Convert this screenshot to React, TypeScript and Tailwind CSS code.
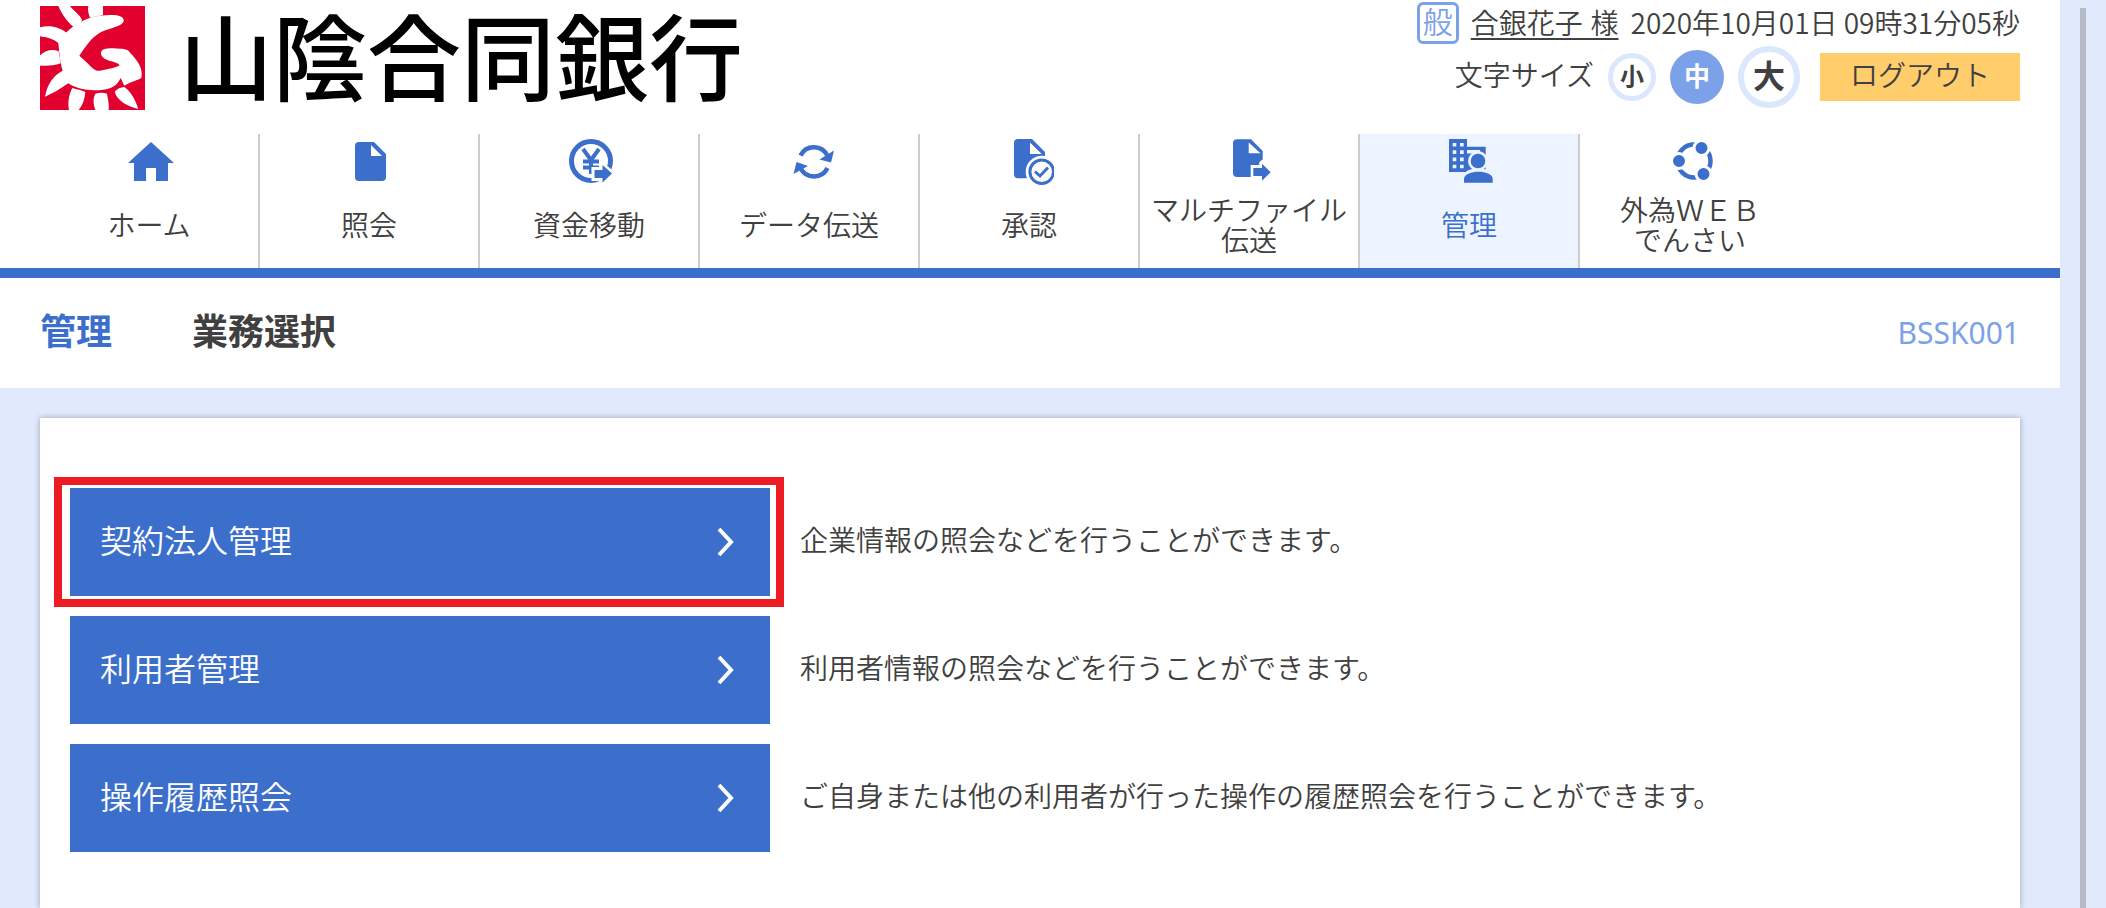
import type { ReactNode } from "react";

interface NavItem { label: string; icon: ReactNode; active?: boolean }
interface Task { label: string; note: string; marked?: boolean }

const Glyph = ({ children }: { children: ReactNode }) => (
  <svg viewBox="0 0 50 50" className="h-[50px] w-[50px]" fill="currentColor" aria-hidden="true">{children}</svg>
);

const NAV: NavItem[] = [
  {
    label: "ホーム",
    icon: <Glyph><path d="M27 6 50 27H44V45H32V32H22V45H10V27H4Z" /></Glyph>,
  },
  {
    label: "照会",
    icon: <Glyph><path fillRule="evenodd" d="M15 6H30L42 18V41a4 4 0 0 1-4 4H15a4 4 0 0 1-4-4V10a4 4 0 0 1 4-4ZM27 9V20H38Z" /></Glyph>,
  },
  {
    label: "資金移動",
    icon: (
      <Glyph>
        <circle cx="27" cy="25" r="19.5" fill="none" stroke="currentColor" strokeWidth="5" />
        <path d="M19 13l8 11 8-11M27 23V38M19 25.5H35M19 31.5H35" fill="none" stroke="currentColor" strokeWidth="4" />
        <path d="M27.5 31H36V24L52 37 38 50V45H27.5Z" fill="#fff" />
        <path d="M30.5 34H38.5V29L48 37.5 38.5 46.5V42H30.5Z" />
      </Glyph>
    ),
  },
  {
    label: "データ伝送",
    icon: (
      <Glyph>
        <path d="M16.5 19.5A15 15 0 0 1 43.5 20M43.5 32A15 15 0 0 1 16.5 32" fill="none" stroke="currentColor" strokeWidth="4.5" />
        <path d="M50 14.5 47 26.5 35.5 23.5ZM9.5 38 12.5 26 24 30Z" />
      </Glyph>
    ),
  },
  {
    label: "承認",
    icon: (
      <Glyph>
        <path fillRule="evenodd" d="M14 3H28L41 16V20L26 42.3H14a4 4 0 0 1-4-4V7a4 4 0 0 1 4-4ZM26 6.5V18H37.7Z" />
        <circle cx="37.7" cy="35.7" r="16" fill="#fff" />
        <circle cx="37.7" cy="35.7" r="11.8" fill="none" stroke="currentColor" strokeWidth="3" />
        <path d="m31 35.5 5 4.5 8-8.5" fill="none" stroke="currentColor" strokeWidth="3" />
      </Glyph>
    ),
  },
  {
    label: "マルチファイル\n伝送",
    icon: (
      <Glyph>
        <path fillRule="evenodd" d="M13 3.3H27L38.7 15V23.5L35.3 26V29H26.7V41H13a4 4 0 0 1-4-4V7.3a4 4 0 0 1 4-4ZM24.7 6.5V17.3H36.5Z" />
        <path d="M29.3 32H38V27.7L46.7 36.3 38 44.7V40H29.3Z" />
      </Glyph>
    ),
  },
  {
    label: "管理",
    active: true,
    icon: (
      <Glyph>
        <path fillRule="evenodd" d="M5 3H23V10.7H41.7V36H5ZM8.7 7V10.5H12.3V7ZM16 7V10.5H19.7V7ZM8.7 14.3V18H12.3V14.3ZM16 14.3V18H19.7V14.3ZM8.7 21.5V25.2H12.3V21.5ZM16 21.5V25.2H19.7V21.5ZM8.7 28.7V32.3H12.3V28.7ZM16 28.7V32.3H19.7V28.7ZM23 14V17.5H36V14Z" />
        <circle cx="34" cy="25" r="10" fill="#edf4ff" />
        <path d="M17 49C17 36 24 32.5 34 32.5S52 36 52 49Z" fill="#edf4ff" />
        <circle cx="34" cy="25" r="7.3" />
        <path d="M20 46.7V43C20 38 28 35.8 34.5 35.8S48.7 38 48.7 43V46.7Z" />
      </Glyph>
    ),
  },
  {
    label: "外為ＷＥＢ\nでんさい",
    icon: (
      <Glyph>
        <circle cx="29" cy="25" r="16.5" fill="none" stroke="currentColor" strokeWidth="4.5" />
        <g stroke="#fff" strokeWidth="3">
          <circle cx="14" cy="25" r="7.5" />
          <circle cx="36.5" cy="12" r="7.5" />
          <circle cx="38.5" cy="38" r="7.5" />
        </g>
      </Glyph>
    ),
  },
];

const TASKS: Task[] = [
  { label: "契約法人管理", note: "企業情報の照会などを行うことができます。", marked: true },
  { label: "利用者管理", note: "利用者情報の照会などを行うことができます。" },
  { label: "操作履歴照会", note: "ご自身または他の利用者が行った操作の履歴照会を行うことができます。" },
];

function LogoMark() {
  return (
    <svg viewBox="120 18 315 312" className="h-[104px] w-[105px]" aria-hidden="true">
      <path d="M120 18H435V330H120Z" fill="#e2002f" />
      <g fill="#fff">
        <path d="M198 98C225 70 260 52 300 47C345 42 374 46 371 64C366 80 335 82 302 97C270 116 258 140 238 167L265 192C280 208 288 214 300 212C325 208 350 202 359 196C352 182 308 186 303 162C302 148 315 145 340 145C372 147 382 146 390 158C412 180 430 205 424 234C405 244 390 246 373 257L362 234C352 256 335 266 310 269C270 274 232 268 205 250C182 266 160 280 135 290C142 252 160 226 188 212C180 185 178 160 175 128Z" />
        <path d="M120 82C152 74 178 82 200 98L178 132C160 116 142 112 120 109Z" />
        <path d="M120 166C138 150 158 146 176 154L182 190C160 198 140 198 120 197Z" />
        <path d="M175 18H210C222 34 240 44 246 60C242 72 232 74 220 80C198 62 186 42 175 18Z" />
        <path d="M265 18H309V45C298 48 284 50 270 53C266 42 262 30 265 18Z" />
        <path d="M217 264C230 268 244 270 256 276C254 298 248 316 236 330H207C203 308 206 284 217 264Z" />
        <path d="M286 281Q304 276 321 281C324 298 328 314 326 330H286C280 312 278 296 286 281Z" />
        <path d="M344 275C352 266 362 262 373 261C394 276 406 300 415 327C386 320 352 304 344 275Z" />
      </g>
    </svg>
  );
}

export default function App() {
  return (
    <div className="flex min-h-screen bg-[#e0eafc] font-['Liberation_Sans','Noto_Sans_CJK_JP',sans-serif] text-[28px] leading-[30px] font-[350] text-[#404040]">
      <div className="flex min-w-0 flex-1 flex-col">
        <header className="bg-white">
          <div className="flex h-[134px] items-start justify-between px-10">
            <div className="flex items-start gap-[34px] pt-[6px]">
              <LogoMark />
              <span className="text-[94px] leading-[112px] font-medium whitespace-nowrap text-black">山陰合同銀行</span>
            </div>
            <div className="flex flex-col items-end whitespace-nowrap">
              <div className="flex h-[46px] items-center gap-3">
                <span className="flex h-[42px] w-[42px] items-center justify-center rounded-md border-[3px] border-[#7ba2e8] text-[30px] text-[#7ba2e8]">般</span>
                <div className="flex items-baseline gap-3">
                  <a href="#user" className="underline underline-offset-4">合銀花子 様</a>
                  <time className="font-['Noto_Sans_CJK_JP',sans-serif]">2020年10月01日 09時31分05秒</time>
                </div>
              </div>
              <div className="flex h-[62px] items-center gap-[14px]">
                <span>文字サイズ</span>
                <button type="button" className="h-12 w-12 rounded-full border-[5px] border-[#dbe7fd] text-[24px] font-bold">小</button>
                <button type="button" className="h-[54px] w-[54px] rounded-full bg-[#7ba2e8] text-[26px] font-bold text-white">中</button>
                <button type="button" className="h-[62px] w-[62px] rounded-full border-[6px] border-[#dbe7fd] text-[32px] font-bold">大</button>
                <button type="button" className="ml-[6px] h-12 w-[200px] bg-[#ffcd6c]">ログアウト</button>
              </div>
            </div>
          </div>
          <nav className="flex h-36 border-b-[10px] border-[#3b6fcb] px-10">
            {NAV.map((n, i) => (
              <a
                key={n.label}
                href={`#menu${i}`}
                className={`flex w-[220px] flex-col items-center pt-[2px] ${i < NAV.length - 1 ? "border-r-2 border-[#cccccc]" : ""} ${n.active ? "bg-[#edf4ff] text-[#3b6fcb]" : ""}`}
              >
                <span className="text-[#3b6fcb]">{n.icon}</span>
                <span className="flex h-[82px] items-center text-center whitespace-pre">{n.label}</span>
              </a>
            ))}
          </nav>
          <div className="flex h-[110px] items-center justify-between px-10">
            <div className="flex gap-20 text-[36px] leading-[48px] font-bold">
              <span className="text-[#3b6fcb]">管理</span>
              <h1>業務選択</h1>
            </div>
            <span className="font-['Noto_Sans',sans-serif] text-[30px] font-normal text-[#7ba2e8]">BSSK001</span>
          </div>
        </header>

        <main className="mx-10 mt-[30px] flex-1 bg-white px-[30px] pt-[70px] shadow-[0_0_6px_rgba(0,0,0,0.3)]">
          <ul className="flex flex-col gap-5">
            {TASKS.map((t) => (
              <li key={t.label} className="flex items-center gap-[30px]">
                <div className="relative w-[700px]">
                  <button type="button" className="flex h-[108px] w-full items-center justify-between bg-[#3b6fcb] px-[30px] text-[32px] text-white">
                    {t.label}
                    <svg viewBox="0 0 30 30" className="h-[30px] w-[30px]" fill="none" stroke="currentColor" strokeWidth="4" aria-hidden="true">
                      <path d="M9 2 21 15 9 28" />
                    </svg>
                  </button>
                  {t.marked && <span className="pointer-events-none absolute -inset-y-[11px] -right-[14px] -left-4 border-8 border-[#ed1c24]" />}
                </div>
                <p className="whitespace-nowrap">{t.note}</p>
              </li>
            ))}
          </ul>
        </main>
      </div>
      <div className="flex w-[46px] pt-2 pl-5">
        <div className="w-[6px] bg-[#b5bac6]" />
      </div>
    </div>
  );
}
